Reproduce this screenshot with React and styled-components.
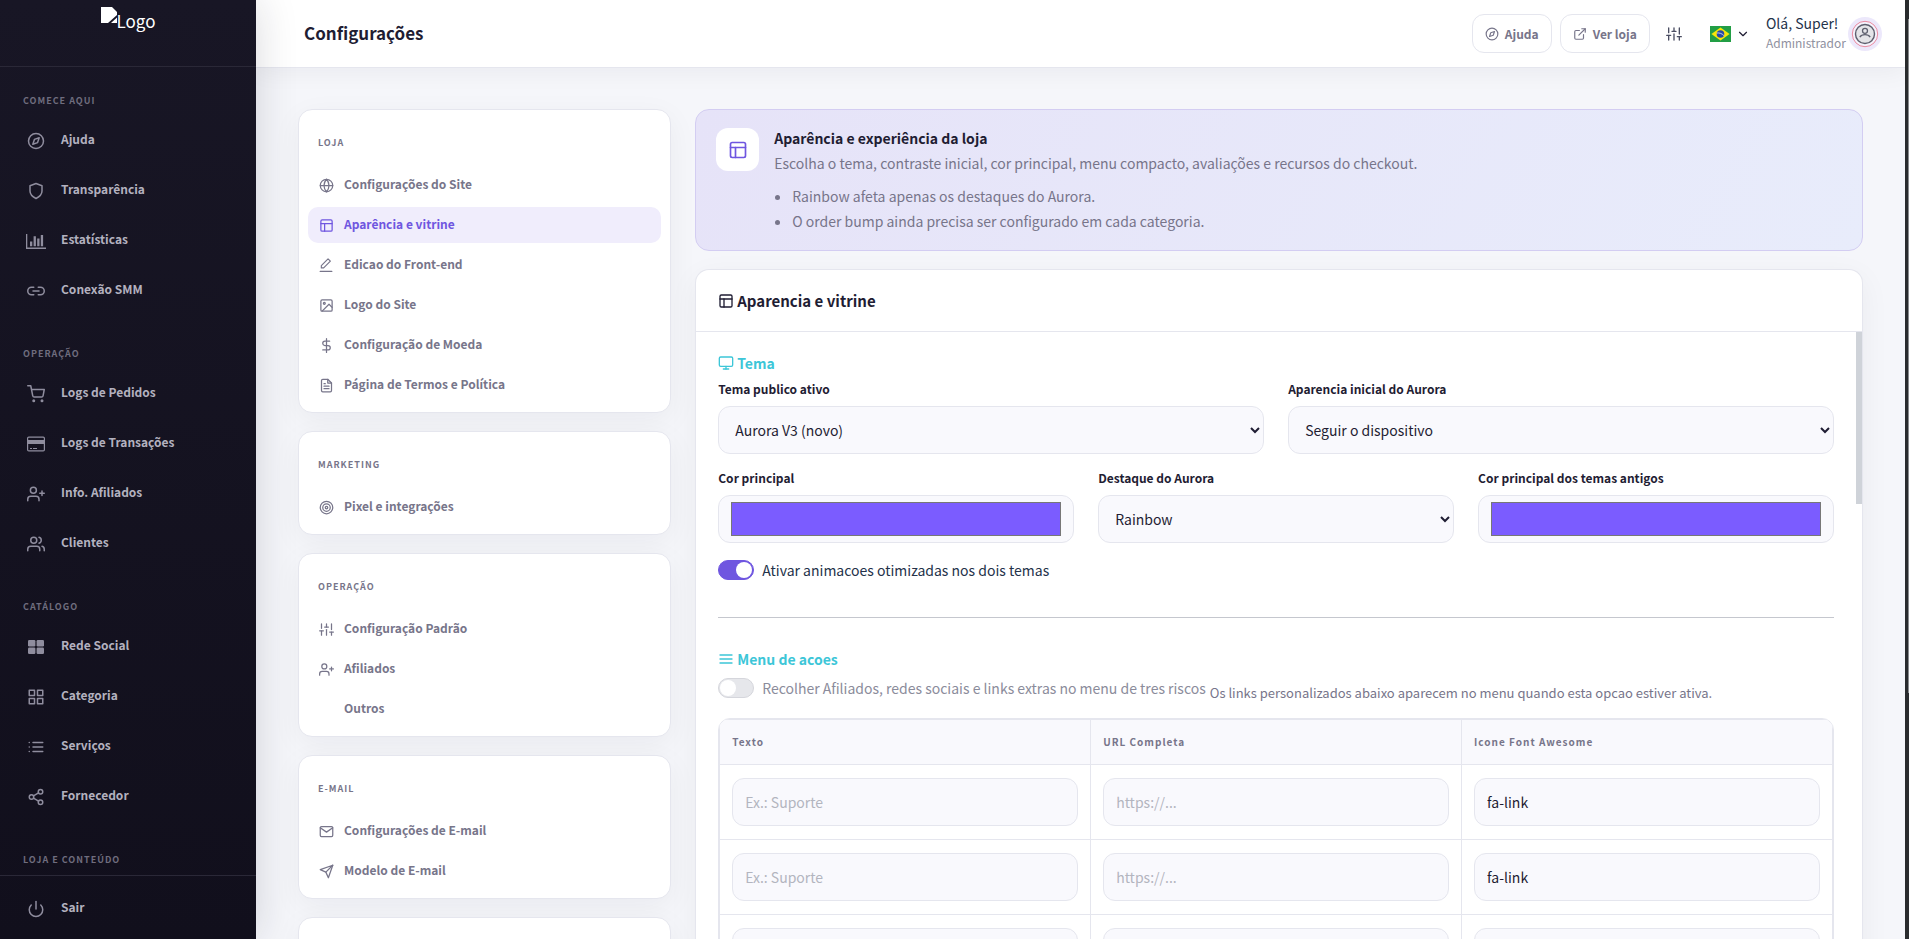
import React, { useState } from 'react';
import styled, { createGlobalStyle, ThemeProvider } from 'styled-components';
import {
  FiChevronDown,
  FiCompass,
  FiDollarSign,
  FiExternalLink,
  FiFileText,
  FiGlobe,
  FiGrid,
  FiImage,
  FiLayout,
  FiLink2,
  FiList,
  FiMail,
  FiMenu,
  FiMonitor,
  FiPower,
  FiSend,
  FiShare2,
  FiShield,
  FiShoppingCart,
  FiSliders,
  FiTarget,
  FiUserPlus,
  FiUsers,
} from 'react-icons/fi';

const theme = {
  font: '"Noto Sans CJK SC", "Noto Sans", sans-serif',
  ink: '#1f1d33',
  text: '#24324a',
  muted: '#77758a',
  line: '#e5e6ee',
  field: '#f9f9fd',
  page: '#f5f6fa',
  accent: '#6f56e0',
  accentSoft: '#f0edfc',
  cyan: '#3dc6d8',
  radius: '14px',
};

const BarChartIcon = () => (
  <svg width="20" height="16" viewBox="0 0 20 16" fill="currentColor">
    <path d="M0 1h1.3v13.6H20V16H0zM4 8.600h2.300v4.600H4zM7.600 3.200h2.300v10H7.600zM11.200 5.400h2.300v7.800h-2.300zM14.800 2h2.300v11.200h-2.300z" />
  </svg>
);

const CreditCardIcon = () => (
  <svg width="18" height="16" viewBox="0 0 18 16" fill="none" stroke="currentColor">
    <rect x=".6" y="1.100" width="16.800" height="13.800" rx="1.200" strokeWidth="1.200" />
    <path d="M1 6h16" strokeWidth="4" />
    <path d="M3 12.500h2M6 12.500h4" strokeWidth="1" />
  </svg>
);

const TilesIcon = () => (
  <svg width="16" height="14" viewBox="0 0 16 14" fill="currentColor">
    <rect width="7.400" height="6.400" rx="1.200" />
    <rect x="8.600" width="7.400" height="6.400" rx="1.200" />
    <rect y="7.600" width="7.400" height="6.400" rx="1.200" />
    <rect x="8.600" y="7.600" width="7.400" height="6.400" rx="1.200" />
  </svg>
);

const EditLineIcon = () => (
  <svg
    width="14"
    height="14"
    viewBox="0 0 24 24"
    fill="none"
    stroke="currentColor"
    strokeWidth="2"
    strokeLinecap="round"
    strokeLinejoin="round"
  >
    <path d="M15.500 1.500l4 4L8 17H4v-4z" />
    <path d="M2 23h20" />
  </svg>
);

const BrokenImageIcon = () => (
  <svg width="16" height="16" viewBox="0 0 16 16" fill="#fff">
    <path d="M0 0h11l5 5v3L7 16H0z" />
    <path d="M16 10.500V16h-6z" />
  </svg>
);

const FlagIcon = () => (
  <svg width="21" height="16" viewBox="0 0 21 16">
    <rect width="21" height="16" fill="#229e45" />
    <path d="M10.500 1.600L19.600 8l-9.100 6.400L1.400 8z" fill="#f8e509" />
    <circle cx="10.500" cy="8" r="3.800" fill="#2b49a3" />
    <path d="M6.900 7c2.500-.4 5.200.6 7 2.600" stroke="#fff" strokeWidth=".7" fill="none" />
  </svg>
);

const AvatarIcon = () => (
  <svg width="34" height="34" viewBox="0 0 34 34" fill="none">
    <circle cx="17" cy="17" r="17" fill="#ece8fb" />
    <circle cx="17" cy="17" r="12.700" fill="#f5f3fd" stroke="#ea8aa0" strokeWidth="1" />
    <circle cx="17" cy="17" r="9.500" fill="#e4e4e8" stroke="#5d5f6e" strokeWidth="1.400" />
    <circle cx="17" cy="13.800" r="2.500" stroke="#5d5f6e" strokeWidth="1.300" />
    <path d="M11.800 20.200c2-3.400 8.400-3.400 10.400 0" stroke="#5d5f6e" strokeWidth="1.300" />
  </svg>
);

const sidebarSections = [
  {
    title: 'Comece aqui',
    items: [
      { label: 'Ajuda', icon: <FiCompass size={18} /> },
      { label: 'Transparência', icon: <FiShield size={18} /> },
      { label: 'Estatísticas', icon: <BarChartIcon /> },
      { label: 'Conexão SMM', icon: <FiLink2 size={18} /> },
    ],
  },
  {
    title: 'Operação',
    items: [
      { label: 'Logs de Pedidos', icon: <FiShoppingCart size={18} /> },
      { label: 'Logs de Transações', icon: <CreditCardIcon /> },
      { label: 'Info. Afiliados', icon: <FiUserPlus size={18} /> },
      { label: 'Clientes', icon: <FiUsers size={18} /> },
    ],
  },
  {
    title: 'Catálogo',
    items: [
      { label: 'Rede Social', icon: <TilesIcon /> },
      { label: 'Categoria', icon: <FiGrid size={18} /> },
      { label: 'Serviços', icon: <FiList size={18} /> },
      { label: 'Fornecedor', icon: <FiShare2 size={18} /> },
    ],
  },
  { title: 'Loja e conteúdo', items: [] },
];

const settingsGroups = [
  {
    title: 'Loja',
    items: [
      { label: 'Configurações do Site', icon: <FiGlobe /> },
      { label: 'Aparência e vitrine', icon: <FiLayout />, active: true },
      { label: 'Edicao do Front-end', icon: <EditLineIcon /> },
      { label: 'Logo do Site', icon: <FiImage /> },
      { label: 'Configuração de Moeda', icon: <FiDollarSign /> },
      { label: 'Página de Termos e Política', icon: <FiFileText /> },
    ],
  },
  {
    title: 'Marketing',
    items: [{ label: 'Pixel e integrações', icon: <FiTarget /> }],
  },
  {
    title: 'Operação',
    items: [
      { label: 'Configuração Padrão', icon: <FiSliders /> },
      { label: 'Afiliados', icon: <FiUserPlus /> },
      { label: 'Outros', icon: null },
    ],
  },
  {
    title: 'E-mail',
    items: [
      { label: 'Configurações de E-mail', icon: <FiMail /> },
      { label: 'Modelo de E-mail', icon: <FiSend /> },
    ],
  },
  { title: '', items: [] },
];

const Sidebar = () => (
  <SidebarWrapper>
    <Brand>
      <BrokenImageIcon />
      <span>Logo</span>
    </Brand>
    <SidebarScroll>
      {sidebarSections.map((section) => (
        <section key={section.title}>
          <SidebarTitle>{section.title}</SidebarTitle>
          {section.items.map((item) => (
            <SidebarLink href="#" key={item.label}>
              <SidebarIcon>{item.icon}</SidebarIcon>
              {item.label}
            </SidebarLink>
          ))}
        </section>
      ))}
    </SidebarScroll>
    <SidebarFooter>
      <SidebarLink href="#">
        <SidebarIcon>
          <FiPower size={18} />
        </SidebarIcon>
        Sair
      </SidebarLink>
    </SidebarFooter>
  </SidebarWrapper>
);

const TopBar = () => (
  <TopBarWrapper>
    <PageTitle>Configurações</PageTitle>
    <OutlineLink href="#">
      <FiCompass size={14} />
      Ajuda
    </OutlineLink>
    <OutlineLink href="#">
      <FiExternalLink size={14} />
      Ver loja
    </OutlineLink>
    <IconButton type="button" aria-label="Ajustes">
      <FiSliders size={16} />
    </IconButton>
    <LanguageButton type="button" aria-label="Idioma">
      <FlagIcon />
      <FiChevronDown size={14} />
    </LanguageButton>
    <ProfileButton type="button">
      <span>
        <strong>Olá, Super!</strong>
        <small>Administrador</small>
      </span>
      <AvatarIcon />
    </ProfileButton>
  </TopBarWrapper>
);

const SettingsMenu = () => (
  <MenuColumn>
    {settingsGroups.map((group) => (
      <MenuCard key={group.title}>
        <MenuTitle>{group.title}</MenuTitle>
        <MenuList>
          {group.items.map((item) => (
            <MenuLink href="#" key={item.label} $active={item.active}>
              <MenuIcon>{item.icon}</MenuIcon>
              {item.label}
            </MenuLink>
          ))}
        </MenuList>
      </MenuCard>
    ))}
  </MenuColumn>
);

const AppearanceForm = () => {
  const [form, setForm] = useState({
    theme: 'aurora',
    mode: 'device',
    mainColor: '#7b5cff',
    highlight: 'rainbow',
    oldColor: '#7b5cff',
    animations: true,
    compactMenu: false,
  });

  const handleChange = (e) => {
    const { name, type, value, checked } = e.target;
    setForm({ ...form, [name]: type === 'checkbox' ? checked : value });
  };

  return (
    <FormBody>
      <SectionTitle>
        <FiMonitor size={16} /> Tema
      </SectionTitle>
      <FieldRow>
        <Field>
          <label htmlFor="theme">Tema publico ativo</label>
          <Select id="theme" name="theme" value={form.theme} onChange={handleChange}>
            <option value="aurora">Aurora V3 (novo)</option>
          </Select>
        </Field>
        <Field>
          <label htmlFor="mode">Aparencia inicial do Aurora</label>
          <Select id="mode" name="mode" value={form.mode} onChange={handleChange}>
            <option value="device">Seguir o dispositivo</option>
          </Select>
        </Field>
      </FieldRow>
      <FieldRow>
        <Field>
          <label htmlFor="mainColor">Cor principal</label>
          <ColorInput
            type="color"
            id="mainColor"
            name="mainColor"
            value={form.mainColor}
            onChange={handleChange}
          />
        </Field>
        <Field>
          <label htmlFor="highlight">Destaque do Aurora</label>
          <Select
            id="highlight"
            name="highlight"
            value={form.highlight}
            onChange={handleChange}
          >
            <option value="rainbow">Rainbow</option>
          </Select>
        </Field>
        <Field>
          <label htmlFor="oldColor">Cor principal dos temas antigos</label>
          <ColorInput
            type="color"
            id="oldColor"
            name="oldColor"
            value={form.oldColor}
            onChange={handleChange}
          />
        </Field>
      </FieldRow>
      <SwitchRow>
        <Switch
          type="checkbox"
          id="animations"
          name="animations"
          checked={form.animations}
          onChange={handleChange}
        />
        <SwitchLabel htmlFor="animations">Ativar animacoes otimizadas nos dois temas</SwitchLabel>
      </SwitchRow>
      <Divider />
      <SectionTitle>
        <FiMenu size={16} /> Menu de acoes
      </SectionTitle>
      <SwitchRow>
        <Switch
          type="checkbox"
          id="compactMenu"
          name="compactMenu"
          checked={form.compactMenu}
          onChange={handleChange}
        />
        <SwitchLabel htmlFor="compactMenu" $muted>
          Recolher Afiliados, redes sociais e links extras no menu de tres riscos
        </SwitchLabel>
        <Hint>Os links personalizados abaixo aparecem no menu quando esta opcao estiver ativa.</Hint>
      </SwitchRow>
      <TableFrame>
        <LinksTable>
          <thead>
            <tr>
              <th>Texto</th>
              <th>URL Completa</th>
              <th>Icone Font Awesome</th>
            </tr>
          </thead>
          <tbody>
            {[1, 2, 3].map((row) => (
              <tr key={row}>
                <td>
                  <TextInput aria-label={`Texto ${row}`} placeholder="Ex.: Suporte" />
                </td>
                <td>
                  <TextInput aria-label={`URL Completa ${row}`} placeholder="https://..." />
                </td>
                <td>
                  <TextInput aria-label={`Icone ${row}`} defaultValue="fa-link" />
                </td>
              </tr>
            ))}
          </tbody>
        </LinksTable>
      </TableFrame>
    </FormBody>
  );
};

const App = () => (
  <ThemeProvider theme={theme}>
    <GlobalStyle />
    <Page>
      <Sidebar />
      <Main>
        <TopBar />
        <Content>
          <SettingsMenu />
          <Panel>
            <Banner>
              <BannerIcon>
                <FiLayout size={20} />
              </BannerIcon>
              <div>
                <h2>Aparência e experiência da loja</h2>
                <p>
                  Escolha o tema, contraste inicial, cor principal, menu compacto, avaliações e
                  recursos do checkout.
                </p>
                <ul>
                  <li>Rainbow afeta apenas os destaques do Aurora.</li>
                  <li>O order bump ainda precisa ser configurado em cada categoria.</li>
                </ul>
              </div>
            </Banner>
            <FormCard>
              <FormHeader>
                <FiLayout size={16} /> Aparencia e vitrine
              </FormHeader>
              <FormScroll>
                <AppearanceForm />
                <ScrollThumb />
              </FormScroll>
            </FormCard>
          </Panel>
        </Content>
      </Main>
      <WindowEdge>
        <span />
      </WindowEdge>
    </Page>
  </ThemeProvider>
);

export default App;

const GlobalStyle = createGlobalStyle`
  * {
    box-sizing: border-box;
  }

  body {
    margin: 0;
    font-family: ${theme.font};
    font-size: 14px;
    line-height: 24px;
    color: ${theme.text};
    background-color: ${theme.page};
  }

  button,
  input,
  select {
    font-family: inherit;
    font-size: inherit;
    color: inherit;
  }

  svg {
    flex-shrink: 0;
  }
`;

const Page = styled.div`
  display: flex;
  height: 100vh;
  overflow: hidden;
`;

const SidebarWrapper = styled.aside`
  display: flex;
  flex-direction: column;
  flex: 0 0 256px;
  z-index: 2;
  background: linear-gradient(180deg, #181625 0%, #110f1c 100%);
  box-shadow: 0 0 40px rgba(24, 22, 45, 0.16);
`;

const Brand = styled.div`
  display: flex;
  justify-content: center;
  flex: 0 0 67px;
  padding-top: 7px;
  border-bottom: 1px solid #2a2837;
  color: #fff;
  font-size: 17px;
  line-height: 28px;
`;

const SidebarScroll = styled.nav`
  flex: 1;
  min-height: 0;
  overflow: hidden;
  padding-top: 22px;
`;

const SidebarTitle = styled.h2`
  margin: 0;
  padding: 0 23px 1px;
  color: #6f6d7e;
  font-size: 9px;
  font-weight: 700;
  letter-spacing: 1px;
  line-height: 24px;
  text-transform: uppercase;
`;

const SidebarLink = styled.a`
  display: flex;
  align-items: center;
  gap: 13px;
  height: 50px;
  padding: 0 24px;
  color: #b3b1bf;
  font-size: 12px;
  font-weight: 600;
  text-decoration: none;

  section > &:last-child {
    margin-bottom: 28px;
  }
`;

const SidebarIcon = styled.span`
  display: flex;
  justify-content: center;
  width: 24px;
  padding-top: 3px;
  color: #8f8d9e;
`;

const SidebarFooter = styled.div`
  height: 64px;
  padding-top: 6px;
  border-top: 1px solid #2a2837;
`;

const Main = styled.div`
  display: flex;
  flex-direction: column;
  flex: 1;
  min-width: 0;
`;

const TopBarWrapper = styled.header`
  display: flex;
  align-items: center;
  flex: 0 0 68px;
  z-index: 1;
  padding: 0 23px 0 48px;
  border-bottom: 1px solid ${({ theme }) => theme.line};
  background-color: #fff;
  box-shadow: 0 4px 24px rgba(24, 22, 45, 0.05);
`;

const PageTitle = styled.h1`
  flex: 1;
  margin: 0;
  padding-bottom: 2px;
  color: ${({ theme }) => theme.ink};
  font-size: 17px;
  font-weight: 700;
`;

const OutlineLink = styled.a`
  display: flex;
  align-items: center;
  gap: 6px;
  height: 39px;
  margin-right: 8px;
  padding: 0 12px;
  border: 1px solid ${({ theme }) => theme.line};
  border-radius: 12px;
  color: ${({ theme }) => theme.muted};
  font-size: 12px;
  font-weight: 700;
  text-decoration: none;
`;

const IconButton = styled.button`
  display: flex;
  padding: 8px;
  border: none;
  background: none;
  color: #4a4d62;
`;

const LanguageButton = styled.button`
  display: flex;
  align-items: center;
  gap: 5px;
  margin: 0 16px 0 20px;
  padding: 0;
  border: none;
  background: none;
  color: ${({ theme }) => theme.ink};
`;

const ProfileButton = styled.button`
  display: flex;
  align-items: center;
  padding: 0;
  border: none;
  background: none;
  text-align: left;

  span {
    padding: 0 2px 2px 0;
  }

  strong,
  small {
    display: block;
    line-height: 19px;
  }

  strong {
    font-size: 14px;
    font-weight: 400;
  }

  small {
    color: #8f91a0;
    font-size: 12px;
  }
`;

const Content = styled.main`
  display: grid;
  grid-template-columns: calc(25% - 18px) 1fr;
  gap: 24px;
  flex: 1;
  min-height: 0;
  overflow: hidden;
  padding: 41px 42px 0;
`;

const MenuColumn = styled.nav`
  display: flex;
  flex-direction: column;
  gap: 18px;
`;

const MenuCard = styled.section`
  padding: 0 9px 9px;
  border: 1px solid ${({ theme }) => theme.line};
  border-radius: ${({ theme }) => theme.radius};
  background-color: #fff;
  box-shadow: 0 8px 30px rgba(24, 22, 45, 0.05);
`;

const MenuTitle = styled.h2`
  height: 57px;
  margin: 0;
  padding: 21px 10px 0;
  color: ${({ theme }) => theme.muted};
  font-size: 9px;
  font-weight: 700;
  letter-spacing: 1px;
  text-transform: uppercase;
`;

const MenuList = styled.div`
  display: flex;
  flex-direction: column;
  gap: 4px;
`;

const MenuLink = styled.a`
  display: flex;
  align-items: center;
  gap: 9px;
  height: 36px;
  padding: 0 9px 2px;
  border-radius: 10px;
  background-color: ${({ $active, theme }) => ($active ? theme.accentSoft : 'transparent')};
  color: ${({ $active, theme }) => ($active ? theme.accent : theme.muted)};
  font-size: 12px;
  font-weight: 700;
  text-decoration: none;
`;

const MenuIcon = styled.span`
  display: flex;
  justify-content: center;
  width: 18px;
  padding-top: 2px;
  font-size: 15px;
`;

const Panel = styled.div`
  display: flex;
  flex-direction: column;
  gap: 18px;
  min-width: 0;
  min-height: 0;
`;

const Banner = styled.section`
  display: flex;
  gap: 15px;
  padding: 18px 20px 16px;
  border: 1px solid #d3cdf2;
  border-radius: ${({ theme }) => theme.radius};
  background: linear-gradient(120deg, #e6e3f8 0%, #e8ecfb 100%);
  color: ${({ theme }) => theme.muted};

  h2 {
    margin: 0 0 3px;
    color: ${({ theme }) => theme.ink};
    font-size: 14px;
    font-weight: 700;
    line-height: 20px;
  }

  p {
    margin: 0 0 8px;
    line-height: 25px;
  }

  ul {
    margin: 0;
    padding-left: 18px;
    line-height: 25px;
  }
`;

const BannerIcon = styled.div`
  display: flex;
  align-items: center;
  justify-content: center;
  flex: 0 0 43px;
  height: 43px;
  border-radius: 12px;
  background-color: #fff;
  color: ${({ theme }) => theme.accent};
`;

const FormCard = styled.section`
  display: flex;
  flex-direction: column;
  flex: 1;
  min-height: 0;
  overflow: hidden;
  border: 1px solid ${({ theme }) => theme.line};
  border-bottom: none;
  border-radius: 14px 14px 0 0;
  background-color: #fff;
  box-shadow: 0 8px 30px rgba(24, 22, 45, 0.05);
`;

const FormHeader = styled.h2`
  display: flex;
  align-items: center;
  gap: 3px;
  flex: 0 0 62px;
  margin: 0;
  padding: 0 22px;
  border-bottom: 1px solid ${({ theme }) => theme.line};
  color: ${({ theme }) => theme.ink};
  font-size: 15px;
  font-weight: 700;
`;

const FormScroll = styled.div`
  display: flex;
  flex: 1;
  min-height: 0;
  overflow: hidden;
`;

const ScrollThumb = styled.div`
  flex: 0 0 6px;
  height: 172px;
  background-color: #cfd3d9;
`;

const FormBody = styled.form`
  flex: 1;
  min-width: 0;
  padding: 19px 22px 0;
`;

const SectionTitle = styled.h3`
  display: flex;
  align-items: center;
  gap: 3px;
  margin: 0 0 2px;
  color: ${({ theme }) => theme.cyan};
  font-size: 14px;
  font-weight: 600;
  line-height: 24px;
`;

const FieldRow = styled.div`
  display: flex;
  gap: 24px;
  margin-bottom: 12px;
`;

const Field = styled.div`
  flex: 1;
  min-width: 0;

  label {
    display: block;
    margin-bottom: 5px;
    color: ${({ theme }) => theme.ink};
    font-size: 12px;
    font-weight: 700;
    line-height: 24px;
  }
`;

const Select = styled.select`
  display: block;
  width: 100%;
  height: 48px;
  padding: 0 0 0 12px;
  border: 1px solid ${({ theme }) => theme.line};
  border-radius: 12px;
  background-color: ${({ theme }) => theme.field};
  color: ${({ theme }) => theme.ink};
`;

const ColorInput = styled.input`
  display: block;
  width: 100%;
  height: 48px;
  padding: 6px 12px;
  border: 1px solid ${({ theme }) => theme.line};
  border-radius: 12px;
  background-color: ${({ theme }) => theme.field};

  &::-webkit-color-swatch-wrapper {
    padding: 0;
  }
`;

const TextInput = styled.input`
  display: block;
  width: 100%;
  height: 48px;
  padding: 0 12px;
  border: 1px solid ${({ theme }) => theme.line};
  border-radius: 12px;
  background-color: ${({ theme }) => theme.field};
  color: ${({ theme }) => theme.ink};

  &::placeholder {
    color: #b3b5bf;
  }
`;

const SwitchRow = styled.div`
  display: flex;
  align-items: center;
`;

const Switch = styled.input`
  appearance: none;
  flex-shrink: 0;
  width: 36px;
  height: 20px;
  margin: 5px 8px 5px 0;
  padding: 1px;
  border: 1px solid ${({ checked, theme }) => (checked ? theme.accent : '#d5d6dc')};
  border-radius: 10px;
  background-color: ${({ checked, theme }) => (checked ? theme.accent : '#e6e7eb')};

  &::before {
    content: '';
    display: block;
    width: 16px;
    height: 16px;
    margin-left: ${({ checked }) => (checked ? '16px' : '0')};
    border-radius: 50%;
    background-color: #fff;
  }
`;

const SwitchLabel = styled.label`
  color: ${({ $muted, theme }) => ($muted ? '#8b8c9b' : theme.text)};
`;

const Hint = styled.small`
  padding: 9px 0 0 4px;
  color: ${({ theme }) => theme.muted};
  font-size: 13px;
  line-height: 20px;
`;

const Divider = styled.hr`
  margin: 32px 0 29px;
  border: none;
  border-top: 1px solid #c5c7ce;
`;

const TableFrame = styled.div`
  margin-top: 15px;
  overflow: hidden;
  border: 1px solid ${({ theme }) => theme.line};
  border-radius: 12px;
`;

const LinksTable = styled.table`
  width: 100%;
  table-layout: fixed;
  border-collapse: collapse;
  border: 1px solid ${({ theme }) => theme.line};

  th,
  td {
    padding: 13px 12px;
    border: 1px solid ${({ theme }) => theme.line};
  }

  th {
    padding: 10px 12px;
    background-color: ${({ theme }) => theme.field};
    color: ${({ theme }) => theme.muted};
    font-size: 10px;
    font-weight: 700;
    letter-spacing: 1px;
    text-align: left;
  }
`;

const WindowEdge = styled.div`
  display: flex;
  justify-content: flex-end;
  flex: 0 0 4px;
  padding-top: 19px;
  background-color: #2a2c2e;

  span {
    width: 1px;
    height: 674px;
    background-color: #8a8c8e;
  }
`;
